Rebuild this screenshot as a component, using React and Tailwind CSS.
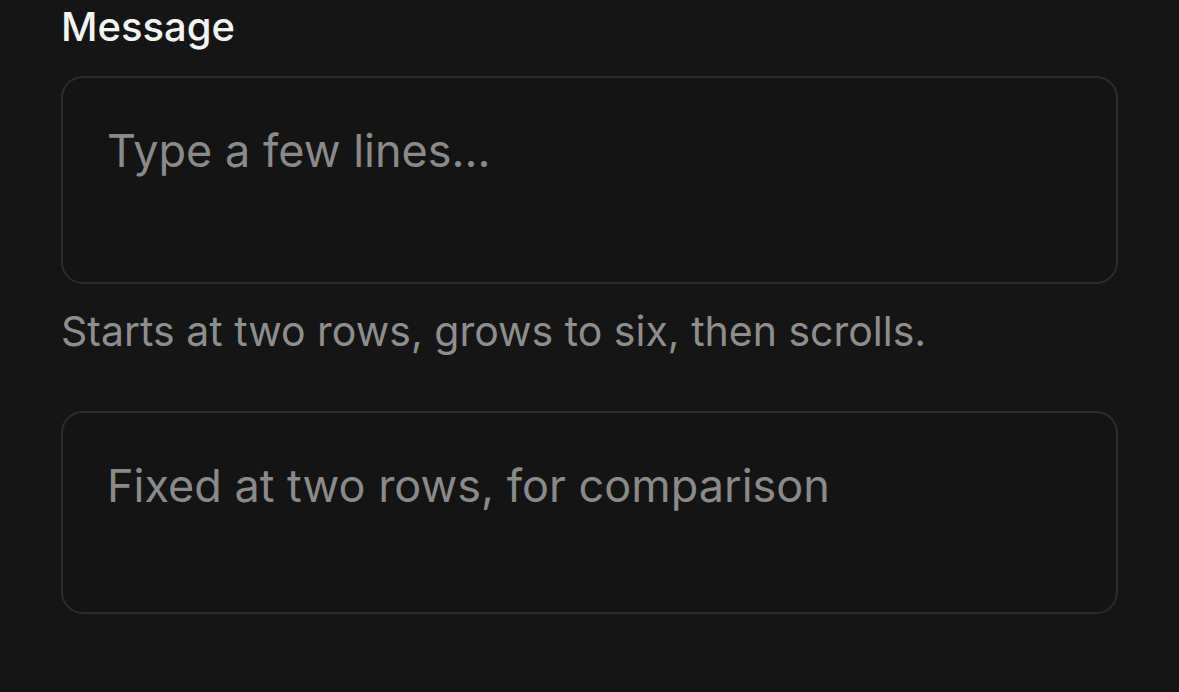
export default function App() {
  return (
    <div
      className="min-h-[692px] w-full bg-[#151515] px-[61px] pt-[4px]"
      style={{ fontFamily: 'Inter, "Noto Sans", sans-serif' }}
    >
      <label className="block text-[40px] leading-[46px] font-medium text-[#f5f5f5]">
        Message
      </label>
      <textarea
        rows={2}
        placeholder="Type a few lines..."
        className="mt-[26px] block h-[208px] w-full resize-none rounded-[22px] border-2 border-[#2c2c2c] bg-[#141414] px-[44px] pt-[46px] pb-[20px] text-[45px] leading-[54px] text-[#e5e5e5] placeholder:text-[#8a8a8a] outline-none"
      />
      <p className="mt-[24px] text-[41px] leading-[46px] text-[#8e8e8e]">
        Starts at two rows, grows to six, then scrolls.
      </p>
      <textarea
        rows={2}
        placeholder="Fixed at two rows, for comparison"
        className="mt-[57px] block h-[203px] w-full resize-none rounded-[22px] border-2 border-[#2c2c2c] bg-[#141414] px-[44px] pt-[46px] pb-[20px] text-[45px] leading-[54px] text-[#e5e5e5] placeholder:text-[#8a8a8a] outline-none"
      />
    </div>
  );
}
